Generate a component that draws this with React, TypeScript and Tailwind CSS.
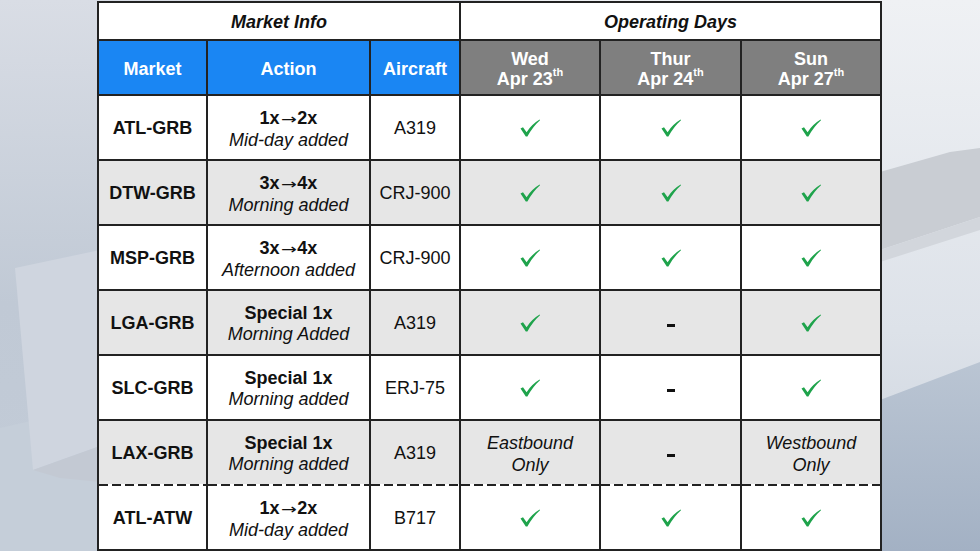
import React from "react";

type Day = "check" | "dash" | string;
type Row = { market: string; a: string; b: string; special?: boolean; bottom: string; aircraft: string; days: Day[]; gray: boolean; dashed?: boolean };

const rows: Row[] = [
  { market: "ATL-GRB", a: "1x", b: "2x", bottom: "Mid-day added", aircraft: "A319", days: ["check", "check", "check"], gray: false },
  { market: "DTW-GRB", a: "3x", b: "4x", bottom: "Morning added", aircraft: "CRJ-900", days: ["check", "check", "check"], gray: true },
  { market: "MSP-GRB", a: "3x", b: "4x", bottom: "Afternoon added", aircraft: "CRJ-900", days: ["check", "check", "check"], gray: false },
  { market: "LGA-GRB", a: "Special 1x", b: "", special: true, bottom: "Morning Added", aircraft: "A319", days: ["check", "dash", "check"], gray: true },
  { market: "SLC-GRB", a: "Special 1x", b: "", special: true, bottom: "Morning added", aircraft: "ERJ-75", days: ["check", "dash", "check"], gray: false },
  { market: "LAX-GRB", a: "Special 1x", b: "", special: true, bottom: "Morning added", aircraft: "A319", days: ["Eastbound|Only", "dash", "Westbound|Only"], gray: true },
  { market: "ATL-ATW", a: "1x", b: "2x", bottom: "Mid-day added", aircraft: "B717", days: ["check", "check", "check"], gray: false, dashed: true },
];

function Check() {
  return (
    <svg width="20" height="18" viewBox="0 0 20 18" className="-mt-[2px]">
      <path d="M0.5 9.5 L3 8.2 L6.6 13.2 Q11.5 5.5 19.6 0.6 L20 1.2 Q12.8 7.6 7.4 17.4 L5.8 17.4 Z" fill="#1ea34b" />
    </svg>
  );
}

function Cell({ gray, dashed, children }: { gray: boolean; dashed?: boolean; children: React.ReactNode }) {
  return (
    <div className={`flex flex-col ${gray ? "bg-[#e6e6e6]" : "bg-white"} ${dashed ? "-mt-[2px]" : ""}`}>
      {dashed && <div className="h-[2px] w-full bg-[repeating-linear-gradient(90deg,#222_0px,#222_9px,transparent_9px,transparent_13px)]" />}
      <div className="flex flex-1 flex-col items-center justify-center text-center pt-[2px]">{children}</div>
    </div>
  );
}

function DayHead({ d, n }: { d: string; n: string }) {
  return (
    <div className="flex flex-col items-center justify-center bg-[#7f7f7f] text-white font-bold leading-[20px] pt-[3px]">
      <div>{d}</div>
      <div>
        Apr {n}
        <sup className="text-[11px] relative -top-[2px] align-super leading-none">th</sup>
      </div>
    </div>
  );
}

export default function App() {
  return (
    <div className="relative w-[980px] h-[551px] overflow-hidden" style={{ fontFamily: '"Liberation Sans", Arial, sans-serif' }}>
      <svg className="absolute inset-0" width="980" height="551" viewBox="0 0 980 551">
        <defs>
          <linearGradient id="bgl" x1="0" y1="0" x2="0" y2="1">
            <stop offset="0" stopColor="#d9dde5" />
            <stop offset="0.55" stopColor="#c0c9d5" />
            <stop offset="1" stopColor="#c3ccd8" />
          </linearGradient>
          <linearGradient id="bgr" x1="0" y1="0" x2="0" y2="1">
            <stop offset="0" stopColor="#eff1f4" />
            <stop offset="0.6" stopColor="#dde2e9" />
            <stop offset="1" stopColor="#c9d1dc" />
          </linearGradient>
          <linearGradient id="br2" x1="0" y1="0" x2="0" y2="1">
            <stop offset="0" stopColor="#bac5d3" />
            <stop offset="1" stopColor="#a3b1c4" />
          </linearGradient>
        </defs>
        <rect x="0" y="0" width="490" height="551" fill="url(#bgl)" />
        <rect x="490" y="0" width="490" height="551" fill="url(#bgr)" />
        <polygon points="0,428 100,405 100,551 0,551" fill="#c5ced9" />
        <polygon points="15,268 100,250 100,446 33,470" fill="#cfd5df" />
        <polygon points="33,470 100,446 100,482 60,478" fill="#c3c9d3" />
        <polygon points="880,172 950,152 980,148 980,217 880,250" fill="#c9cdd3" />
        <polygon points="880,250 980,217 980,230 880,262" fill="#d2d6dc" />
        <polygon points="880,400 980,362 980,551 880,551" fill="url(#br2)" />
      </svg>
      <div className="relative ml-[97px] mt-[1px] w-[785px] grid bg-[#222] p-[2px] gap-[2px] grid-cols-[107px_161px_88px_138px_139px_138px] grid-rows-[36px_53px_repeat(7,63px)] text-[18px] text-[#111]">
        <div className="col-span-3 flex items-center justify-center bg-white font-bold italic pt-[3px]">Market Info</div>
        <div className="col-span-3 flex items-center justify-center bg-white font-bold italic pt-[3px]">Operating Days</div>

        <div className="flex items-center justify-center bg-[#1a86f3] text-white font-bold pt-[3px]">Market</div>
        <div className="flex items-center justify-center bg-[#1a86f3] text-white font-bold pt-[3px]">Action</div>
        <div className="flex items-center justify-center bg-[#1a86f3] text-white font-bold pt-[3px]">Aircraft</div>
        <DayHead d="Wed" n="23" />
        <DayHead d="Thur" n="24" />
        <DayHead d="Sun" n="27" />

        {rows.map((r) => (
          <React.Fragment key={r.market}>
            <Cell gray={r.gray} dashed={r.dashed}>
              <span className="font-bold">{r.market}</span>
            </Cell>
            <Cell gray={r.gray} dashed={r.dashed}>
              <div className="font-bold leading-[21px] flex items-center">
                {r.special ? (
                  r.a
                ) : (
                  <>
                    <span>{r.a}</span>
                    <span
                      className="inline-block font-normal text-[14px] mx-[3px] mt-[2px] scale-x-[1.35]"
                      style={{ fontFamily: '"DejaVu Sans", sans-serif' }}
                    >
                      {"\u2192"}
                    </span>
                    <span>{r.b}</span>
                  </>
                )}
              </div>
              <div className="italic leading-[21px]">{r.bottom}</div>
            </Cell>
            <Cell gray={r.gray} dashed={r.dashed}>
              <span>{r.aircraft}</span>
            </Cell>
            {r.days.map((d, i) => (
              <Cell key={i} gray={r.gray} dashed={r.dashed}>
                {d === "check" ? (
                  <Check />
                ) : d === "dash" ? (
                  <div className="w-[8px] h-[3px] bg-[#111] mt-[4px]" />
                ) : (
                  <>
                    <div className="italic leading-[22px]">{d.split("|")[0]}</div>
                    <div className="italic leading-[22px]">{d.split("|")[1]}</div>
                  </>
                )}
              </Cell>
            ))}
          </React.Fragment>
        ))}
      </div>
    </div>
  );
}
